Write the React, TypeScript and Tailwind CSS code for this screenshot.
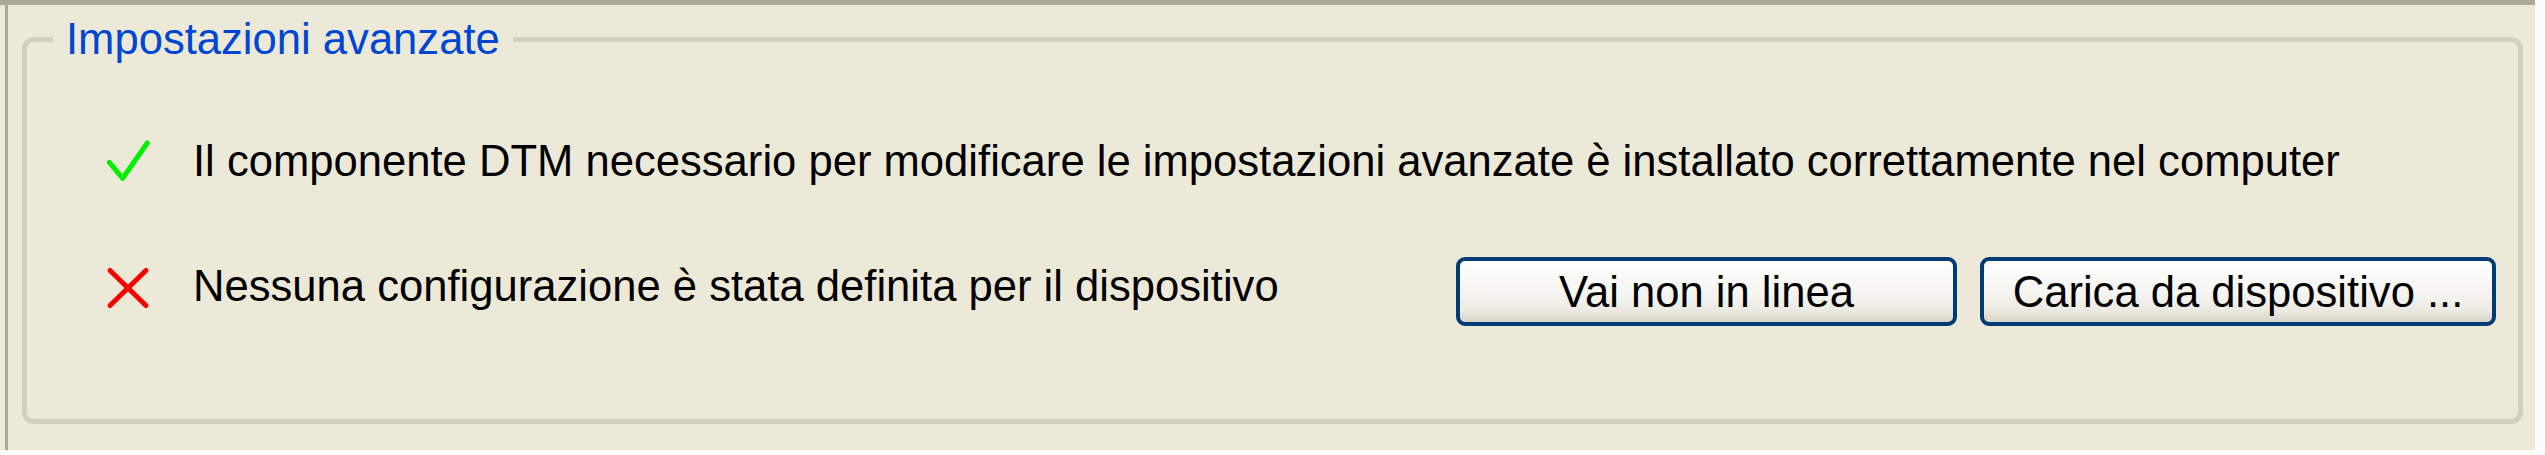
export default function App() {
  return (
    <div className="w-[2545px] h-[455px] bg-[#fbfbf9] font-['Liberation_Sans',Arial,sans-serif] text-black">
      <div className="w-[2535px] h-[450px] bg-[#ece9d8] border-t-[5px] border-[#aca899] flex">
        <div className="w-[5px]" />
        <div className="w-[3px] bg-[#aca899]" />
        <div className="pl-[14px] pt-[10px]">
          <fieldset className="w-[2501px] h-[409px] border-[5px] border-[#d2cfbd] rounded-[12px] p-0 m-0">
            <legend className="ml-[26px] px-[13px] text-[43.6px] leading-[48px] text-[#0046d5]">
              Impostazioni avanzate
            </legend>
            <div className="flex flex-col pl-[79px] pr-[22px]">
              <div className="mt-[74px] h-[48px] flex items-center">
                <svg width="44" height="44" viewBox="0 0 44 44" className="shrink-0">
                  <polyline
                    points="3.3,23.3 16.7,39.3 41.3,4"
                    fill="none"
                    stroke="#00f000"
                    strokeWidth="5"
                    strokeLinecap="round"
                    strokeLinejoin="round"
                  />
                </svg>
                <span className="ml-[43px] text-[43.6px] leading-[48px] whitespace-nowrap">
                  Il componente DTM necessario per modificare le impostazioni avanzate è installato correttamente nel computer
                </span>
              </div>
              <div className="mt-[72px] flex items-start">
                <svg width="44" height="44" viewBox="0 0 44 44" className="shrink-0 mt-[9px]">
                  <g stroke="#ff0000" strokeWidth="5" strokeLinecap="round">
                    <line x1="4" y1="4.5" x2="40" y2="39.5" />
                    <line x1="40" y1="4.5" x2="4" y2="39.5" />
                  </g>
                </svg>
                <span className="ml-[43px] mt-[5px] text-[43.6px] leading-[48px] whitespace-nowrap">
                  Nessuna configurazione è stata definita per il dispositivo
                </span>
                <div className="ml-auto flex gap-[23px]">
                  <button className="w-[501px] h-[69px] border-4 border-[#003c74] rounded-[9px] bg-[linear-gradient(180deg,#ffffff_0%,#f5f4f0_55%,#eceae2_80%,#d8d3c7_100%)] text-[43.6px] leading-[48px] text-black flex items-center justify-center">
                    Vai non in linea
                  </button>
                  <button className="w-[516px] h-[69px] border-4 border-[#003c74] rounded-[9px] bg-[linear-gradient(180deg,#ffffff_0%,#f5f4f0_55%,#eceae2_80%,#d8d3c7_100%)] text-[43.6px] leading-[48px] text-black flex items-center justify-center">
                    Carica da dispositivo ...
                  </button>
                </div>
              </div>
            </div>
          </fieldset>
        </div>
      </div>
    </div>
  );
}
